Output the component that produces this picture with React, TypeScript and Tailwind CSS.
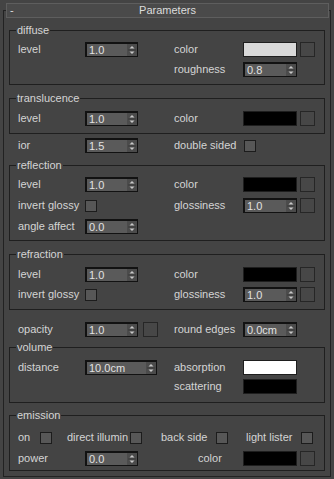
import React from 'react';

const ROW = 'grid grid-cols-[67px_89px_69px_54px_3px_15px] items-center h-[15px]';

function Arrows() {
  return (
    <svg width="10" height="12" viewBox="0 0 10 12" className="block">
      <polygon points="2.5,4.5 7.5,4.5 5,2" fill="#c8c8c8" />
      <line x1="1" y1="6" x2="9" y2="6" stroke="#3a3a3a" strokeWidth="1" />
      <polygon points="2.5,7.5 7.5,7.5 5,10" fill="#c8c8c8" />
    </svg>
  );
}

function Spinner({ value, w = 'w-[53px]' }: { value: string; w?: string }) {
  return (
    <div className={`${w} h-[15px] flex border border-[#121212] border-t-2 border-l-2 bg-[#5a5a5a]`}>
      <div className="flex-1 pl-[2px] text-[11px] leading-[12px] text-[#e2e2e2]">{value}</div>
      <div className="w-[10px] bg-[#4b4b4b]">
        <Arrows />
      </div>
    </div>
  );
}

function Swatch({ color }: { color: string }) {
  return <div className={`w-[54px] h-[15px] border border-[#1e1e1e] ${color}`} />;
}

function SmallButton() {
  return <div className="w-[15px] h-[15px] border border-[#262626] bg-[#474747]" />;
}

function Check() {
  return <div className="w-[12px] h-[12px] border border-[#1c1c1c] bg-[#575757]" />;
}

function Label({ children, className = '' }: { children?: React.ReactNode; className?: string }) {
  return <span className={`text-[#d4d4d4] leading-[13px] whitespace-nowrap ${className}`}>{children}</span>;
}

function Group({ title, className, children }: { title: string; className: string; children: React.ReactNode }) {
  return (
    <div className={`relative border border-[#1f1f1f] pl-[8px] ${className}`}>
      <span className="absolute -top-[7px] left-[6px] px-[1px] bg-[#444444] text-[#d4d4d4] leading-[13px]">
        {title}
      </span>
      {children}
    </div>
  );
}

export default function App() {
  return (
    <div className="w-[334px] h-[479px] bg-[#444444] pt-[10px] px-[3px] font-['Liberation_Sans',Arial,sans-serif] text-[11px] overflow-hidden">
      <div className="border border-[#222222]">
        {/* Rollout header */}
        <div className="-mt-[8px] ml-[2px] mr-[1px] h-[15px] grid grid-cols-[20px_1fr_20px] items-center bg-[#4a4a4a] border border-[#5e5e5e] text-[#dcdcdc] leading-[13px]">
          <span className="pl-[3px]">-</span>
          <span className="text-center">Parameters</span>
          <span />
        </div>

        <div className="px-[5px]">
          {/* diffuse */}
          <Group title="diffuse" className="mt-[12px] pt-[11px] pb-[7px] flex flex-col gap-[5px]">
            <div className={ROW}>
              <Label>level</Label>
              <Spinner value="1.0" />
              <Label>color</Label>
              <Swatch color="bg-[#d9d9d9]" />
              <span />
              <SmallButton />
            </div>
            <div className={ROW}>
              <span />
              <span />
              <Label>roughness</Label>
              <Spinner value="0.8" w="w-[54px]" />
            </div>
          </Group>

          {/* translucence */}
          <Group title="translucence" className="mt-[13px] pt-[12px] pb-[7px]">
            <div className={ROW}>
              <Label>level</Label>
              <Spinner value="1.0" />
              <Label>color</Label>
              <Swatch color="bg-black" />
              <span />
              <SmallButton />
            </div>
          </Group>

          <div className={`${ROW} mt-[4px] pl-[9px] box-content`}>
            <Label>ior</Label>
            <Spinner value="1.5" />
            <Label>double sided</Label>
            <div className="pl-[1px]">
              <Check />
            </div>
          </div>

          {/* reflection */}
          <Group title="reflection" className="mt-[12px] pt-[11px] pb-[6px] flex flex-col gap-[6px]">
            <div className={ROW}>
              <Label>level</Label>
              <Spinner value="1.0" />
              <Label>color</Label>
              <Swatch color="bg-black" />
              <span />
              <SmallButton />
            </div>
            <div className={ROW}>
              <Label>invert glossy</Label>
              <Check />
              <Label>glossiness</Label>
              <Spinner value="1.0" w="w-[54px]" />
              <span />
              <SmallButton />
            </div>
            <div className={ROW}>
              <Label>angle affect</Label>
              <Spinner value="0.0" />
            </div>
          </Group>

          {/* refraction */}
          <Group title="refraction" className="mt-[13px] pt-[12px] pb-[7px] flex flex-col gap-[5px]">
            <div className={ROW}>
              <Label>level</Label>
              <Spinner value="1.0" />
              <Label>color</Label>
              <Swatch color="bg-black" />
              <span />
              <SmallButton />
            </div>
            <div className={ROW}>
              <Label>invert glossy</Label>
              <Check />
              <Label>glossiness</Label>
              <Spinner value="1.0" w="w-[54px]" />
              <span />
              <SmallButton />
            </div>
          </Group>

          <div className={`${ROW} mt-[12px] pl-[9px] box-content`}>
            <Label>opacity</Label>
            <div className="flex items-center gap-[5px]">
              <Spinner value="1.0" />
              <SmallButton />
            </div>
            <Label>round edges</Label>
            <Spinner value="0.0cm" w="w-[54px]" />
          </div>

          {/* volume */}
          <Group title="volume" className="mt-[10px] pt-[12px] pb-[8px] flex flex-col gap-[4px]">
            <div className={ROW}>
              <Label>distance</Label>
              <Spinner value="10.0cm" w="w-[72px]" />
              <Label>absorption</Label>
              <Swatch color="bg-white" />
            </div>
            <div className={ROW}>
              <span />
              <span />
              <Label>scattering</Label>
              <Swatch color="bg-black" />
            </div>
          </Group>

          {/* emission */}
          <Group title="emission" className="mt-[12px] pt-[14px] pb-[4px] mb-[5px] flex flex-col gap-[6px]">
            <div className="flex items-center h-[15px]">
              <Label className="w-[22px]">on</Label>
              <Check />
              <Label className="ml-[15px] w-[63px]">direct illumin</Label>
              <Check />
              <Label className="ml-[19px] w-[55px]">back side</Label>
              <Check />
              <Label className="ml-[18px] w-[55px]">light lister</Label>
              <Check />
            </div>
            <div className={ROW}>
              <Label>power</Label>
              <Spinner value="0.0" />
              <Label className="pl-[24px]">color</Label>
              <Swatch color="bg-black" />
              <span />
              <SmallButton />
            </div>
          </Group>
        </div>
      </div>
    </div>
  );
}
